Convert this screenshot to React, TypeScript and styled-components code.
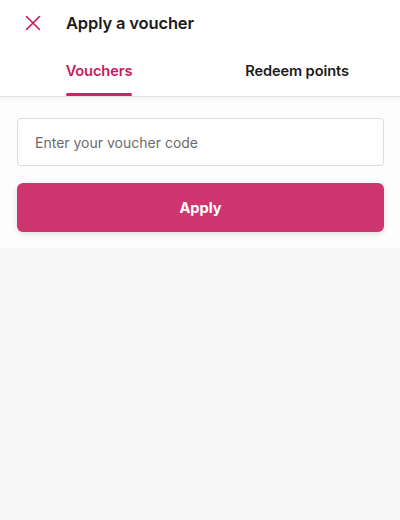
import React from "react";
import styled, { createGlobalStyle } from "styled-components";

const Global = createGlobalStyle`
  html, body { margin: 0; padding: 0; background: #f7f7f7; }
  body { font-family: Inter, "Noto Sans", sans-serif; -webkit-font-smoothing: antialiased; }
  * { box-sizing: border-box; }
`;

const Page = styled.div`
  width: 400px;
  height: 520px;
  background: #f7f7f7;
  display: flex;
  flex-direction: column;
`;

const Header = styled.div`
  background: #fff;
  border-bottom: 1px solid #e3e3e3;
  position: relative;
  z-index: 1;
  box-shadow: 0 2px 6px rgba(0, 0, 0, 0.05);
`;

const TopBar = styled.div`
  height: 46px;
  display: flex;
  align-items: center;
  padding-left: 24px;
  gap: 24px;
`;

const CloseButton = styled.button`
  width: 18px;
  height: 18px;
  padding: 0;
  border: 0;
  background: none;
  display: flex;
  align-items: center;
  justify-content: center;
`;

const Title = styled.h1`
  margin: 0;
  font-size: 16.5px;
  font-weight: 600;
  color: #1b1b1b;
  letter-spacing: -0.15px;
`;

const Tabs = styled.div`
  display: grid;
  grid-template-columns: 1fr 1fr;
  height: 50px;
  padding-right: 4px;
`;

const Tab = styled.div`
  display: flex;
  justify-content: center;
  align-items: flex-start;
  padding-top: 16px;
`;

const TabLabel = styled.span<{ $active?: boolean }>`
  position: relative;
  font-size: 14.6px;
  font-weight: 600;
  letter-spacing: -0.1px;
  color: ${(p) => (p.$active ? "#cc175f" : "#1b1b1b")};
  height: 34px;
  &::after {
    content: "";
    display: ${(p) => (p.$active ? "block" : "none")};
    position: absolute;
    left: 0;
    right: 0;
    bottom: 0;
    height: 3px;
    border-radius: 2px;
    background: #d1206a;
  }
`;

const Section = styled.div`
  background: #fdfdfd;
  padding: 21px 16px 16px 17px;
  display: flex;
  flex-direction: column;
  gap: 17px;
`;

const Input = styled.input`
  height: 48px;
  width: 100%;
  border: 1px solid #dcdcdc;
  border-radius: 4px;
  background: #fff;
  padding: 0 17px;
  font-family: inherit;
  font-size: 14px;
  color: #222;
  outline: none;
  &::placeholder { color: #6b6b6b; }
`;

const ApplyButton = styled.button`
  height: 49px;
  width: 100%;
  border: 0;
  border-radius: 6px;
  background: #cf356e;
  color: #fff;
  font-family: inherit;
  font-size: 14.6px;
  font-weight: 700;
  box-shadow: 0 2px 6px rgba(0, 0, 0, 0.12);
  cursor: pointer;
`;

export default function App() {
  return (
    <>
      <Global />
      <Page>
        <Header>
          <TopBar>
            <CloseButton aria-label="Close">
              <svg width="16" height="16" viewBox="0 0 16 16">
                <path d="M1.5 1.5 L14.5 14.5 M14.5 1.5 L1.5 14.5" stroke="#cc175f" strokeWidth="1.6" strokeLinecap="round" />
              </svg>
            </CloseButton>
            <Title>Apply a voucher</Title>
          </TopBar>
          <Tabs>
            <Tab>
              <TabLabel $active>Vouchers</TabLabel>
            </Tab>
            <Tab>
              <TabLabel>Redeem points</TabLabel>
            </Tab>
          </Tabs>
        </Header>
        <Section>
          <Input placeholder="Enter your voucher code" />
          <ApplyButton>Apply</ApplyButton>
        </Section>
      </Page>
    </>
  );
}
